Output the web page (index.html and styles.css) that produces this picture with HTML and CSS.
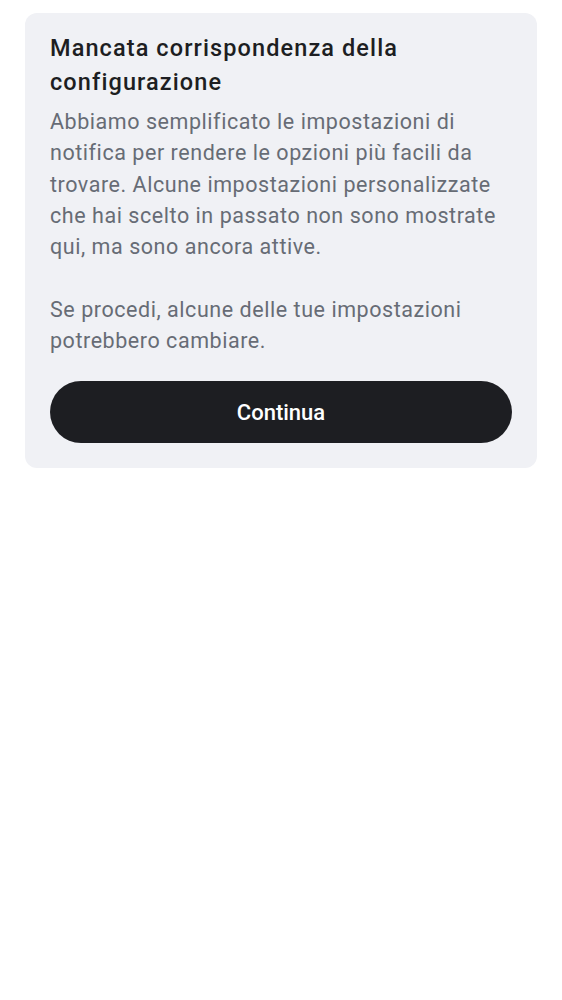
FILE: index.html
```html
<!DOCTYPE html>
<html lang="it">
<head>
<meta charset="utf-8">
<link rel="stylesheet" href="styles.css">
</head>
<body>
<div class="card">
  <h1 class="title">Mancata corrispondenza della configurazione</h1>
  <p class="body">Abbiamo semplificato le impostazioni di notifica per rendere le opzioni più facili da trovare. Alcune impostazioni personalizzate che hai scelto in passato non sono mostrate qui, ma sono ancora attive.<br><br>Se procedi, alcune delle tue impostazioni potrebbero cambiare.</p>
  <button class="btn">Continua</button>
</div>
</body>
</html>
```
FILE: styles.css
```css
html, body {
  margin: 0;
  padding: 0;
  background: #ffffff;
}
body {
  font-family: Roboto, "Noto Sans", sans-serif;
  padding: 13px 25px 0 25px;
}
.card {
  background: #f0f1f5;
  border-radius: 12px;
  padding: 18px 25px 25px 25px;
  display: flex;
  flex-direction: column;
}
.title {
  margin: 0;
  font-size: 23.5px;
  font-weight: 500;
  line-height: 34px;
  color: #1d1e22;
  letter-spacing: 1.1px;
}
.body {
  margin: 7px 0 0 0;
  font-size: 21.5px;
  line-height: 31.3px;
  color: #676c75;
  letter-spacing: 0.55px;
}
.btn {
  margin-top: 25px;
  height: 62px;
  border: none;
  border-radius: 31px;
  background: #1d1e22;
  color: #ffffff;
  font-family: Roboto, "Noto Sans", sans-serif;
  font-size: 22px;
  font-weight: 500;
  width: 100%;
}
```
